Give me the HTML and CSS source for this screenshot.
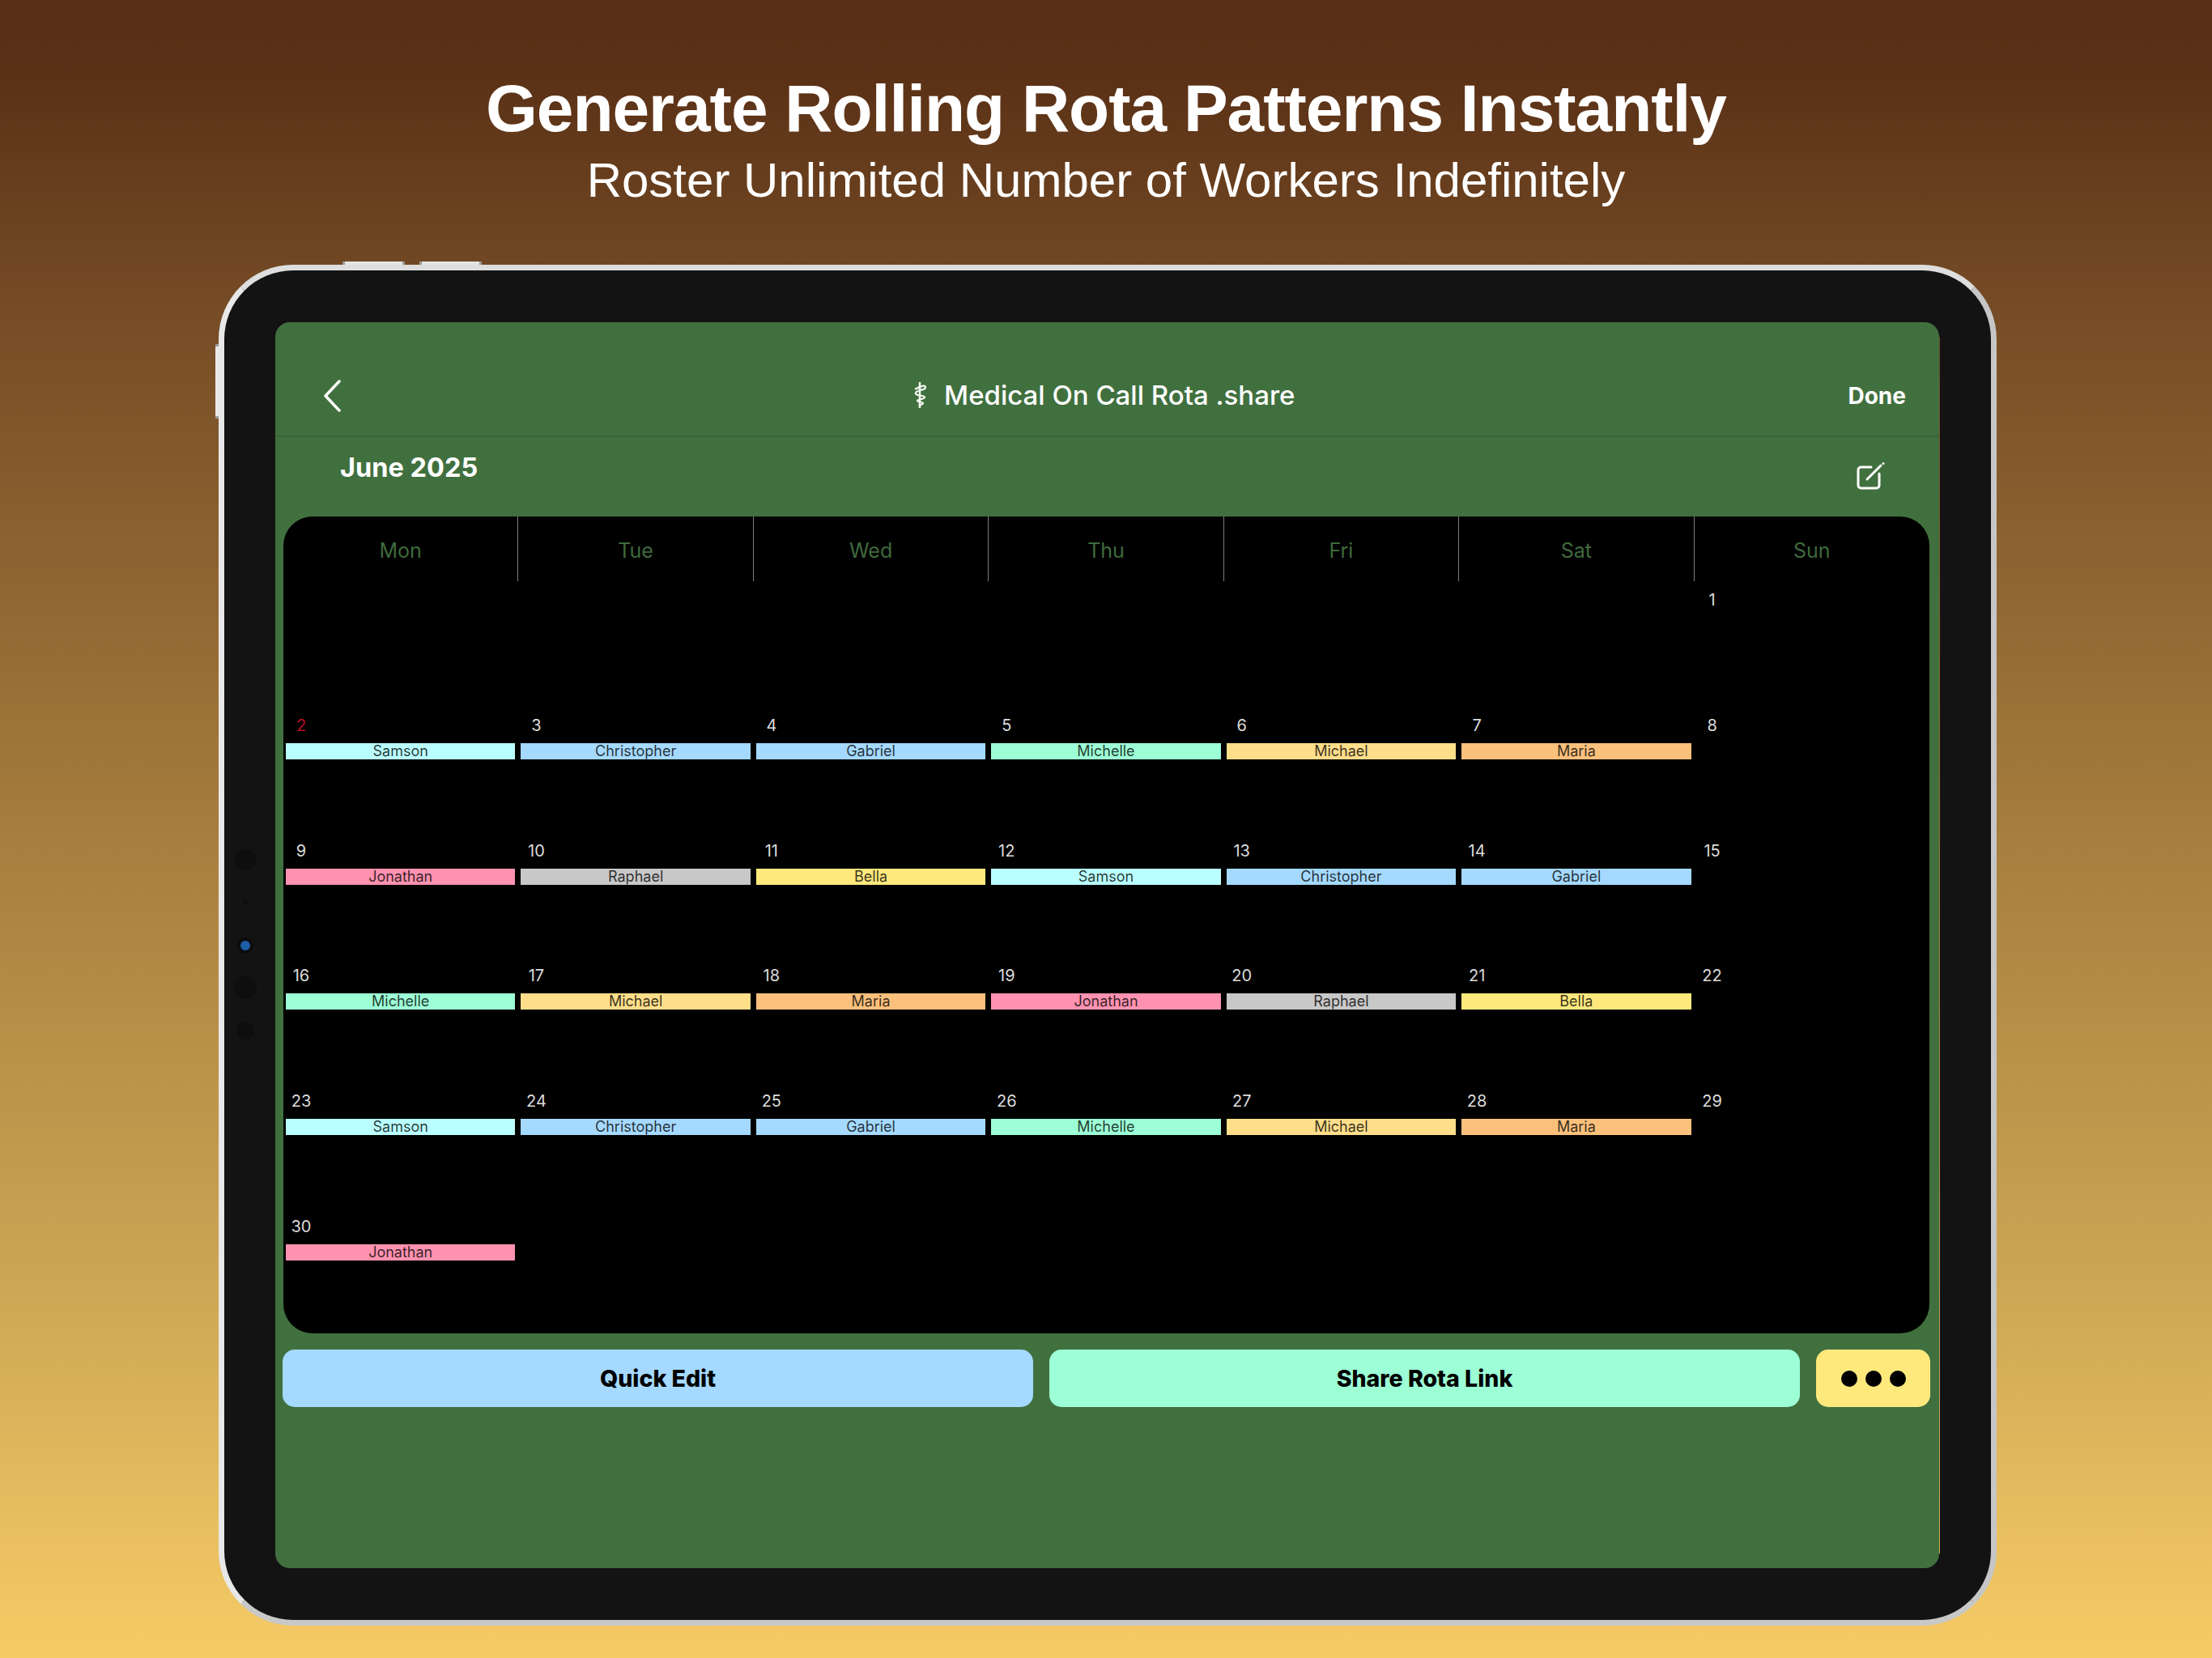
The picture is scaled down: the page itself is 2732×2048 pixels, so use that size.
FILE: index.html
```html
<!DOCTYPE html>
<html lang="en">
<head>
<meta charset="utf-8">
<title>Rota</title>
<link rel="stylesheet" href="styles.css">
</head>
<body>
<main class="page">
  <header class="promo">
    <h1 class="promo-title">Generate Rolling Rota Patterns Instantly</h1>
    <p class="promo-sub">Roster Unlimited Number of Workers Indefinitely</p>
  </header>
  <div class="device">
    <span class="hw hw-top hw-top-a"></span>
    <span class="hw hw-top hw-top-b"></span>
    <span class="hw hw-side"></span>
    <span class="sensor s1"></span>
    <span class="sensor s2"></span>
    <span class="sensor s3"></span>
    <span class="sensor s4"></span>
    <span class="sensor s5"></span>
    <section class="screen">
      <nav class="navbar">
        <svg class="back" viewBox="0 0 24 40" width="24" height="40"><path d="M21 2 L4 20 L21 38"/></svg>
        <div class="nav-title">
          <svg class="staff" viewBox="0 0 20 36" width="20" height="36"><path d="M9 2V34"/><path d="M3 10C6 11 7 8 9 8"/><path class="thin" d="M9 8C12 6 16 6 16 8.500S13 11 10 12 3 14 4 16.500 14 18 15 20.500 6 23 6 25 13 26 13 28 9 30 8 31"/></svg>
          <span>Medical On Call Rota .share</span>
        </div>
        <span class="done">Done</span>
      </nav>
      <div class="month-row">
        <h2 class="month">June 2025</h2>
        <svg class="edit" viewBox="0 0 36 36" width="36" height="36"><path d="M19 7H6.500A3.500 3.500 0 0 0 3 10.500V29.500A3.500 3.500 0 0 0 6.500 33H25.500A3.500 3.500 0 0 0 29 29.500V15"/><path d="M14 22L31 5"/><circle class="dot" cx="34" cy="2.500" r="1.500"/></svg>
      </div>
      <div class="calendar">
        <div class="weekdays">
          <div class="wd">Mon</div><div class="wd">Tue</div><div class="wd">Wed</div><div class="wd">Thu</div><div class="wd">Fri</div><div class="wd">Sat</div><div class="wd">Sun</div>
        </div>
        <div class="days">
          <div class="day"></div><div class="day"></div><div class="day"></div><div class="day"></div><div class="day"></div><div class="day"></div>
          <div class="day"><span class="num">1</span></div>

          <div class="day"><span class="num red">2</span><span class="bar samson">Samson</span></div>
          <div class="day"><span class="num">3</span><span class="bar blue">Christopher</span></div>
          <div class="day"><span class="num">4</span><span class="bar blue">Gabriel</span></div>
          <div class="day"><span class="num">5</span><span class="bar mint">Michelle</span></div>
          <div class="day"><span class="num">6</span><span class="bar michael">Michael</span></div>
          <div class="day"><span class="num">7</span><span class="bar maria">Maria</span></div>
          <div class="day"><span class="num">8</span></div>

          <div class="day"><span class="num">9</span><span class="bar pink">Jonathan</span></div>
          <div class="day"><span class="num">10</span><span class="bar grey">Raphael</span></div>
          <div class="day"><span class="num">11</span><span class="bar bella">Bella</span></div>
          <div class="day"><span class="num">12</span><span class="bar samson">Samson</span></div>
          <div class="day"><span class="num">13</span><span class="bar blue">Christopher</span></div>
          <div class="day"><span class="num">14</span><span class="bar blue">Gabriel</span></div>
          <div class="day"><span class="num">15</span></div>

          <div class="day"><span class="num">16</span><span class="bar mint">Michelle</span></div>
          <div class="day"><span class="num">17</span><span class="bar michael">Michael</span></div>
          <div class="day"><span class="num">18</span><span class="bar maria">Maria</span></div>
          <div class="day"><span class="num">19</span><span class="bar pink">Jonathan</span></div>
          <div class="day"><span class="num">20</span><span class="bar grey">Raphael</span></div>
          <div class="day"><span class="num">21</span><span class="bar bella">Bella</span></div>
          <div class="day"><span class="num">22</span></div>

          <div class="day"><span class="num">23</span><span class="bar samson">Samson</span></div>
          <div class="day"><span class="num">24</span><span class="bar blue">Christopher</span></div>
          <div class="day"><span class="num">25</span><span class="bar blue">Gabriel</span></div>
          <div class="day"><span class="num">26</span><span class="bar mint">Michelle</span></div>
          <div class="day"><span class="num">27</span><span class="bar michael">Michael</span></div>
          <div class="day"><span class="num">28</span><span class="bar maria">Maria</span></div>
          <div class="day"><span class="num">29</span></div>

          <div class="day"><span class="num">30</span><span class="bar pink">Jonathan</span></div>
          <div class="day"></div><div class="day"></div><div class="day"></div><div class="day"></div><div class="day"></div><div class="day"></div>
        </div>
      </div>
      <div class="actions">
        <button class="btn btn-blue">Quick Edit</button>
        <button class="btn btn-mint">Share Rota Link</button>
        <button class="btn btn-more"><i></i><i></i><i></i></button>
      </div>
    </section>
  </div>
</main>
</body>
</html>
```
FILE: styles.css
```css
* { box-sizing: border-box; }
html, body { margin: 0; padding: 0; }
body { width: 2732px; height: 2048px; overflow: hidden; font-family: Inter, "Noto Sans", sans-serif; }
.page {
  width: 2732px; height: 2048px;
  background: linear-gradient(180deg, #582e15 0%, #5a3016 4%, #6f4622 15%, #a67d3d 50%, #c9a252 75%, #f6cb66 100%);
  padding-top: 86px;
  display: flex; flex-direction: column; align-items: center;
}
.promo { text-align: center; height: 241px; color: #fff; font-family: "Liberation Sans", Arial, sans-serif; }
.promo-title { margin: 0; font-size: 82px; line-height: 96px; font-weight: 700; letter-spacing: -1px; }
.promo-sub { margin: 3px 0 0; font-size: 60px; line-height: 76px; font-weight: 400; }

.device {
  position: relative;
  width: 2196px; height: 1681px; margin-left: 4px;
  background: #131313;
  border-radius: 92px;
  border: 7px solid;
  border-color: #dedede #c6c6c6 #c8c8c8 #e8e8e8;
  padding: 64px 64px 64px 63px;
}
.hw { position: absolute; }
.hw-top {
  top: -11px; height: 4px; width: 77px;
  background: linear-gradient(90deg, #9a9a9a 0 3px, #e4e4e4 3px calc(100% - 3px), #9a9a9a calc(100% - 3px));
}
.hw-top-a { left: 146px; }
.hw-top-b { left: 241px; }
.hw-side {
  left: -11px; top: 91px; width: 4px; height: 92px;
  background: linear-gradient(180deg, #9a9a9a 0 3px, #e8e8e8 3px calc(100% - 3px), #9a9a9a calc(100% - 3px));
}
.sensor { position: absolute; border-radius: 50%; background: #0e0e0e; transform: translate(-50%, -50%); left: 26px; }
.s1 { top: 728px; width: 26px; height: 26px; }
.s2 { top: 780px; width: 6px; height: 6px; }
.s3 { top: 834px; width: 12px; height: 12px; background: #1d5ea8; box-shadow: 0 0 0 4px #0c0c0c; }
.s4 { top: 886px; width: 28px; height: 28px; }
.s5 { top: 939px; width: 22px; height: 22px; }

.screen {
  position: relative;
  width: 2055px; height: 1539px;
  background: #41703f;
  border-radius: 18px;
  display: flex; flex-direction: column;
}
.screen::after {
  content: ""; position: absolute; right: -1px; top: 18px; bottom: 18px; width: 1px;
  background: linear-gradient(180deg, #6f4622, #d2a95a);
}
.navbar {
  height: 142px; flex: none;
  display: flex; align-items: flex-end; justify-content: space-between;
  border-bottom: 2px solid #3a6438;
  padding: 0 41px 29px 58px;
  color: #fff;
}
.back { fill: none; stroke: #fff; stroke-width: 3.500; stroke-linecap: round; stroke-linejoin: round; }
.nav-title {
  display: flex; align-items: center; gap: 19px;
  font-size: 33px; font-weight: 500; line-height: 42px;
  margin-left: 22px;
}
.staff { fill: none; stroke: #f2f6f0; stroke-width: 2.500; }
.staff .thin { stroke-width: 2.200; }
.done { font-size: 28px; font-weight: 700; line-height: 40px; }
.month-row {
  height: 98px; flex: none;
  display: flex; justify-content: space-between; align-items: flex-start;
  padding: 18px 67px 0 80px;
}
.month { margin: 0; font-size: 32.500px; line-height: 40px; font-weight: 700; color: #fff; }
.edit { fill: none; stroke: #fff; stroke-width: 3; stroke-linecap: round; margin-top: 12px; }
.edit .dot { fill: #fff; stroke: none; }

.calendar {
  flex: none;
  margin: 0 12px 0 10px;
  height: 1009px;
  background: #000;
  border-radius: 36px;
  display: flex; flex-direction: column;
  overflow: hidden;
}
.weekdays { display: grid; grid-template-columns: repeat(7, 1fr); height: 80px; flex: none; }
.wd {
  display: flex; align-items: center; justify-content: center;
  color: #3f6a3d; font-size: 25px; padding-top: 3px;
  border-right: 1px solid #7d7d7d;
}
.wd:last-child { border-right: 0; }
.days { display: grid; grid-template-columns: repeat(7, 1fr); grid-template-rows: repeat(6, 1fr); flex: 1; }
.day { display: flex; flex-direction: column; padding: 11px 4px 0 3px; min-width: 0; }
.num { width: 38px; height: 25px; line-height: 25px; text-align: center; color: #dcdcdc; font-size: 20px; }
.red { color: #b30f22; }
.bar {
  margin-top: 9px; height: 20px; line-height: 20px; text-align: center;
  font-size: 18px; color: rgba(0, 0, 0, .78);
}
.samson { background: #baffff; }
.blue { background: #a5d9ff; }
.mint { background: #9dffd6; }
.michael { background: #ffde8a; }
.maria { background: #fac07c; }
.pink { background: #ff92b0; }
.grey { background: #c8c8c8; }
.bella { background: #ffe97d; }

.actions { display: flex; gap: 20px; margin: 20px 11px 0 9px; height: 71px; flex: none; }
.btn { border: 0; border-radius: 15px; font-family: inherit; font-size: 28.500px; font-weight: 800; color: #000; padding: 0; flex: 1 1 0; }
.btn-blue { background: #a5d9ff; }
.btn-mint { background: #9dffd6; }
.btn-more { flex: 0 0 141px; background: #ffe97d; display: flex; align-items: center; justify-content: center; gap: 10px; }
.btn-more i { width: 20px; height: 20px; border-radius: 50%; background: #000; }
```
